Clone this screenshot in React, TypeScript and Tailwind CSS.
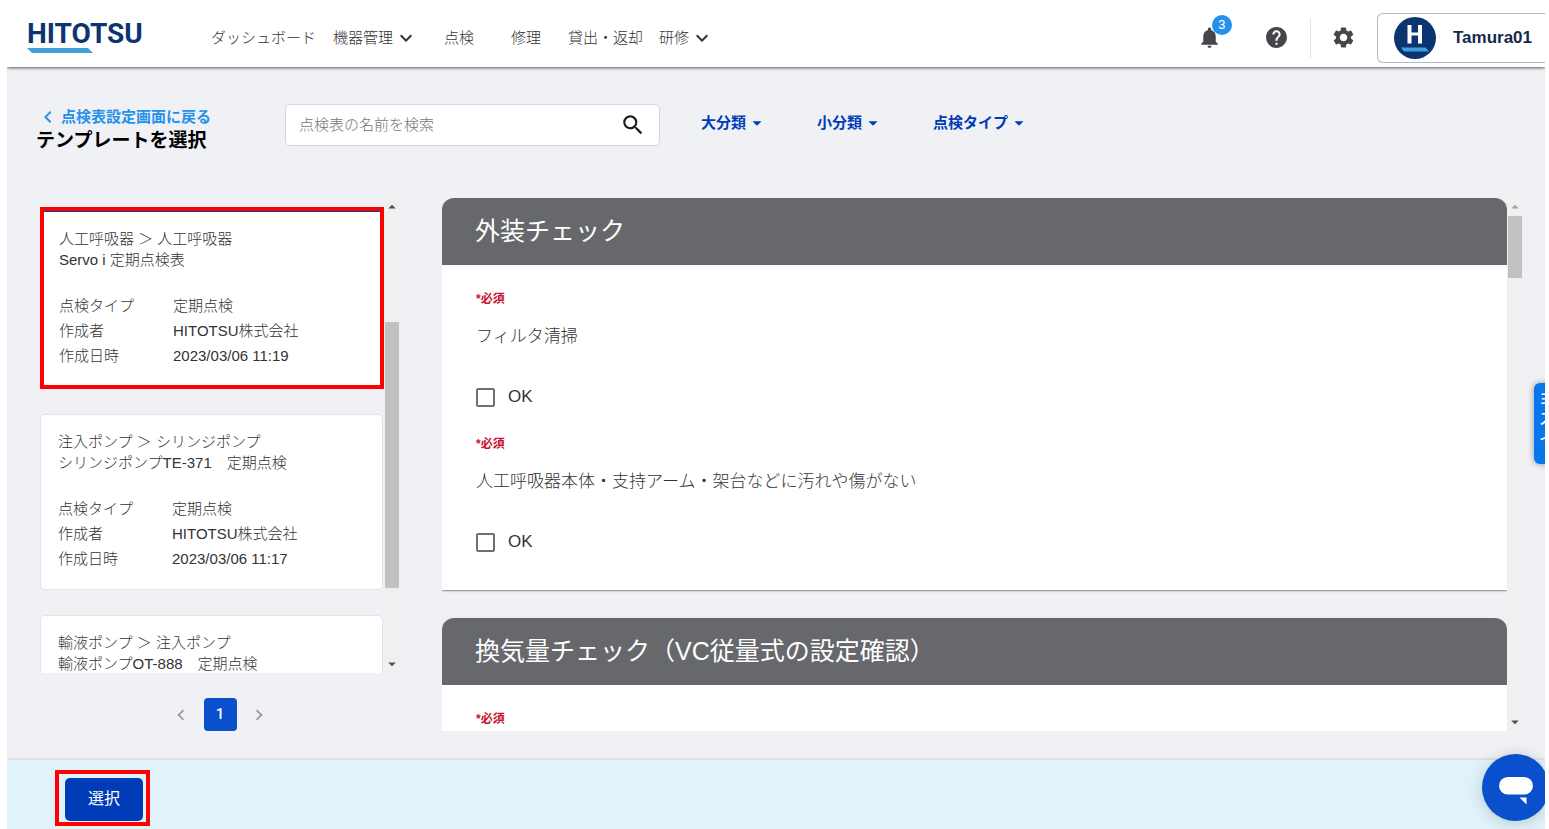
import React from 'react';
import {
  MdNotifications,
  MdHelp,
  MdSettings,
  MdSearch,
  MdArrowDropDown,
  MdArrowDropUp,
  MdExpandMore,
  MdChevronLeft,
  MdChevronRight,
} from 'react-icons/md';

type Template = {
  path: string;
  name: string;
  type: string;
  author: string;
  createdAt: string;
};

const templates: Template[] = [
  {
    path: '人工呼吸器 ＞ 人工呼吸器',
    name: 'Servo i 定期点検表',
    type: '定期点検',
    author: 'HITOTSU株式会社',
    createdAt: '2023/03/06 11:19',
  },
  {
    path: '注入ポンプ ＞ シリンジポンプ',
    name: 'シリンジポンプTE-371　定期点検',
    type: '定期点検',
    author: 'HITOTSU株式会社',
    createdAt: '2023/03/06 11:17',
  },
  {
    path: '輸液ポンプ ＞ 注入ポンプ',
    name: '輸液ポンプOT-888　定期点検',
    type: '',
    author: '',
    createdAt: '',
  },
];

function Logo() {
  return (
    <a href="#home" className="flex w-[184px] shrink-0 flex-col pb-[2px] pl-5">
      <span className="font-[Roboto,sans-serif] text-[28px] leading-7 font-bold text-[#0c3470]">HITOTSU</span>
      <svg viewBox="0 0 66 5" className="h-[5px] w-[66px]" aria-hidden="true">
        <path d="M0 0H61L66 5H5Z" fill="#3f9fd8" />
      </svg>
    </a>
  );
}

function NavLink({ label, menu, className }: { label: string; menu?: boolean; className: string }) {
  return (
    <a href="#nav" className={`flex shrink-0 items-center ${className}`}>
      {label}
      {menu && <MdExpandMore className="ml-px size-6 shrink-0 text-[#333]" />}
    </a>
  );
}

function Header() {
  return (
    <header className="z-10 flex h-[67px] shrink-0 items-center bg-white pt-2 shadow-[0_1px_3px_rgba(0,0,0,0.65)]">
      <Logo />
      <nav className="flex flex-1 items-center pl-5 text-[15px] leading-5">
        <NavLink label="ダッシュボード" className="w-[122px]" />
        <NavLink label="機器管理" menu className="w-[111px]" />
        <NavLink label="点検" className="w-[67px]" />
        <NavLink label="修理" className="w-[57px]" />
        <NavLink label="貸出・返却" className="w-[91px]" />
        <NavLink label="研修" menu className="w-14" />
      </nav>
      <div className="flex h-[50px] shrink-0 items-center text-[#45464a]">
        <button type="button" aria-label="通知" className="relative mr-[42px]">
          <MdNotifications className="size-[25px]" />
          <span className="absolute -top-[10px] left-[15px] flex size-5 items-center justify-center rounded-full bg-[#2491eb] font-[Roboto,sans-serif] text-[13px] font-normal text-white">
            3
          </span>
        </button>
        <button type="button" aria-label="ヘルプ" className="mr-[21px]">
          <MdHelp className="size-[25px]" />
        </button>
        <div className="mr-5 h-10 w-px bg-[#e4e5e8]" />
        <button type="button" aria-label="設定" className="mr-[21px]">
          <MdSettings className="size-[25px]" />
        </button>
        <button
          type="button"
          className="flex h-[50px] items-center rounded-l-md border border-r-0 border-[#b3bac6] pr-[13px] pl-4 font-['Liberation_Sans',sans-serif] text-[17px] font-bold text-[#14284b]"
        >
          <svg viewBox="0 0 42 42" className="mr-[17px] size-[42px]" aria-hidden="true">
            <circle cx="21" cy="21" r="21" fill="#0c3470" />
            <path d="M13.500 8h4v7.500h6.500V8h4v18.500h-4v-8h-6.500v8h-4Z" fill="#fff" />
            <path d="M7 30.500h24.500l3.500 4H10Z" fill="#3f9fd8" />
          </svg>
          Tamura01
        </button>
      </div>
    </header>
  );
}

function FilterButton({ label }: { label: string }) {
  return (
    <button type="button" className="flex items-center text-[15px] leading-5 font-bold text-[#003cb8]">
      {label}
      <MdArrowDropDown className="size-[22px]" />
    </button>
  );
}

function Toolbar() {
  return (
    <div className="flex shrink-0 items-start pt-[37px]">
      <div className="w-[278px] shrink-0 pt-px pl-[29px]">
        <a href="#back" className="flex items-center text-[15px] leading-6 font-bold text-[#2491eb]">
          <MdChevronLeft className="mr-px size-6" />
          点検表設定画面に戻る
        </a>
        <h1 className="text-[19px] leading-6 font-bold text-black">テンプレートを選択</h1>
      </div>
      <label className="flex h-[42px] w-[375px] items-center rounded-[5px] border border-[#d5d7da] bg-white pr-[13px] pb-px pl-[13px]">
        <input
          type="text"
          aria-label="点検表の名前を検索"
          placeholder="点検表の名前を検索"
          className="min-w-0 flex-1 text-[15px] leading-5 outline-none placeholder:text-[#757575]"
        />
        <MdSearch className="size-[26px] text-[#1c1c1c]" />
      </label>
      <div className="flex gap-[49px] pt-2 pl-[41px]">
        <FilterButton label="大分類" />
        <FilterButton label="小分類" />
        <FilterButton label="点検タイプ" />
      </div>
    </div>
  );
}

function Scrollbar({ thumb, dimUp }: { thumb: string; dimUp?: boolean }) {
  return (
    <div className="flex w-4 shrink-0 flex-col items-center bg-[#f0f0f0]" aria-hidden="true">
      <MdArrowDropUp className={`size-[18px] shrink-0 ${dimUp ? 'text-[#a3a3a3]' : 'text-[#505050]'}`} />
      <div className="flex min-h-0 w-full flex-1 flex-col px-px">
        <div className={`bg-[#c1c1c1] ${thumb}`} />
      </div>
      <MdArrowDropDown className="size-[18px] shrink-0 text-[#505050]" />
    </div>
  );
}

function TemplateCard({ item, selected }: { item: Template; selected?: boolean }) {
  return (
    <article
      className={
        selected
          ? 'border-4 border-[#ff0000] bg-white px-[15px] pt-[17px] pb-[17px] shadow-[inset_0_1px_0_#003cb8]'
          : 'mr-px rounded-[5px] border border-[#e3e4e8] bg-white px-[17px] pt-4 pb-[18px]'
      }
    >
      <p className="leading-[21px]">{item.path}</p>
      <p className="leading-[21px]">{item.name}</p>
      {item.type && (
        <dl className="mt-[23px] grid grid-cols-[114px_1fr] leading-[25px]">
          <dt>点検タイプ</dt>
          <dd>{item.type}</dd>
          <dt>作成者</dt>
          <dd>{item.author}</dd>
          <dt>作成日時</dt>
          <dd>{item.createdAt}</dd>
        </dl>
      )}
    </article>
  );
}

function TemplateList() {
  return (
    <section className="flex w-[360px] shrink-0 flex-col">
      <div className="flex min-h-0 flex-1">
        <div className="flex min-w-0 flex-1 flex-col gap-[25px] overflow-hidden pt-[9px] text-[15px]">
          {templates.map((t, i) => (
            <div key={t.name} className="shrink-0">
              <TemplateCard item={t} selected={i === 0} />
            </div>
          ))}
        </div>
        <Scrollbar thumb="mt-[106px] h-[266px]" />
      </div>
      <div className="flex h-[58px] items-end justify-center gap-[6px]">
        <button type="button" aria-label="前のページ" className="flex size-[33px] items-center justify-center text-[#9a9a9a]">
          <MdChevronLeft className="size-[22px]" />
        </button>
        <button
          type="button"
          className="flex size-[33px] items-center justify-center rounded bg-[#0a50cc] font-[Roboto,sans-serif] text-[15px] font-medium text-white"
        >
          1
        </button>
        <button type="button" aria-label="次のページ" className="flex size-[33px] items-center justify-center text-[#9a9a9a]">
          <MdChevronRight className="size-[22px]" />
        </button>
      </div>
    </section>
  );
}

function CheckItem({ label }: { label: string }) {
  return (
    <div className="h-[145px]">
      <p className="text-xs leading-5 font-bold text-[#c8102e]">*必須</p>
      <p className="mt-4 text-[17px] leading-6">{label}</p>
      <label className="mt-9 flex w-fit items-center gap-[13px] text-[17px] leading-6">
        <input
          type="checkbox"
          className="size-[19px] appearance-none rounded-[2px] border-2 border-[#707070] bg-white checked:bg-[#0a50cc]"
        />
        OK
      </label>
    </div>
  );
}

function CheckSection({ title, items }: { title: string; items: string[] }) {
  return (
    <section className="shrink-0 rounded-t-xl bg-white shadow-[0_1px_2px_rgba(0,0,0,0.45)]">
      <h2 className="flex h-[67px] items-center rounded-t-xl bg-[#67686c] px-[33px] pb-[2px] text-[25px] leading-8 font-normal text-white">
        {title}
      </h2>
      <div className="px-[34px] pt-6 pb-[11px]">
        {items.map((label) => (
          <CheckItem key={label} label={label} />
        ))}
      </div>
    </section>
  );
}

function Preview() {
  return (
    <section className="flex min-w-0 flex-1">
      <div className="flex min-w-0 flex-1 flex-col gap-7 overflow-hidden">
        <CheckSection
          title="外装チェック"
          items={['フィルタ清掃', '人工呼吸器本体・支持アーム・架台などに汚れや傷がない']}
        />
        <CheckSection title="換気量チェック（VC従量式の設定確認）" items={['']} />
      </div>
      <Scrollbar thumb="h-[62px]" dimUp />
    </section>
  );
}

export default function App() {
  return (
    <div className="h-screen bg-white pr-1 pl-[7px] font-['Liberation_Sans','Noto_Sans_CJK_JP',sans-serif] font-light text-[#333]">
      <div className="relative flex h-full flex-col overflow-hidden">
        <Header />
        <main className="flex min-h-0 flex-1 flex-col bg-[#f0f1f5]">
          <Toolbar />
          <div className="mt-[45px] mb-[29px] flex min-h-0 flex-1 gap-[42px] pr-[22px] pl-[33px]">
            <TemplateList />
            <Preview />
          </div>
        </main>
        <footer className="z-10 flex h-[69px] shrink-0 items-start bg-[#e0f3fb] pt-[10px] pl-12 shadow-[0_-1px_3px_rgba(0,0,0,0.12)]">
          <div className="flex border-4 border-[#ff0000] pt-1 pr-[3px] pb-px pl-[6px]">
            <button
              type="button"
              className="h-[43px] w-[78px] rounded-[5px] bg-[#003cb8] pb-[2px] text-base font-normal text-white"
            >
              選択
            </button>
          </div>
        </footer>
        <button
          type="button"
          className="absolute top-[383px] -right-5 flex h-[81px] w-[31px] flex-col items-start rounded-l-md bg-[#0877ec] pt-[6px] pl-[5px] text-[15px] leading-5 font-medium text-white shadow-[0_0_6px_rgba(0,0,0,0.4)]"
        >
          <span>ヨ</span>
          <span>ス</span>
          <span>イ</span>
        </button>
        <button
          type="button"
          aria-label="チャット"
          className="absolute -right-1 bottom-2 z-20 flex size-[67px] items-center justify-center rounded-full bg-[#0a50cc] shadow-[0_2px_16px_rgba(0,0,0,0.18)]"
        >
          <svg viewBox="0 0 34 34" className="size-[34px]" aria-hidden="true">
            <rect y="6" width="34" height="17.500" rx="8.750" fill="#fff" />
            <path d="M20.500 26.500h7v7Z" fill="#fff" />
          </svg>
        </button>
      </div>
    </div>
  );
}
